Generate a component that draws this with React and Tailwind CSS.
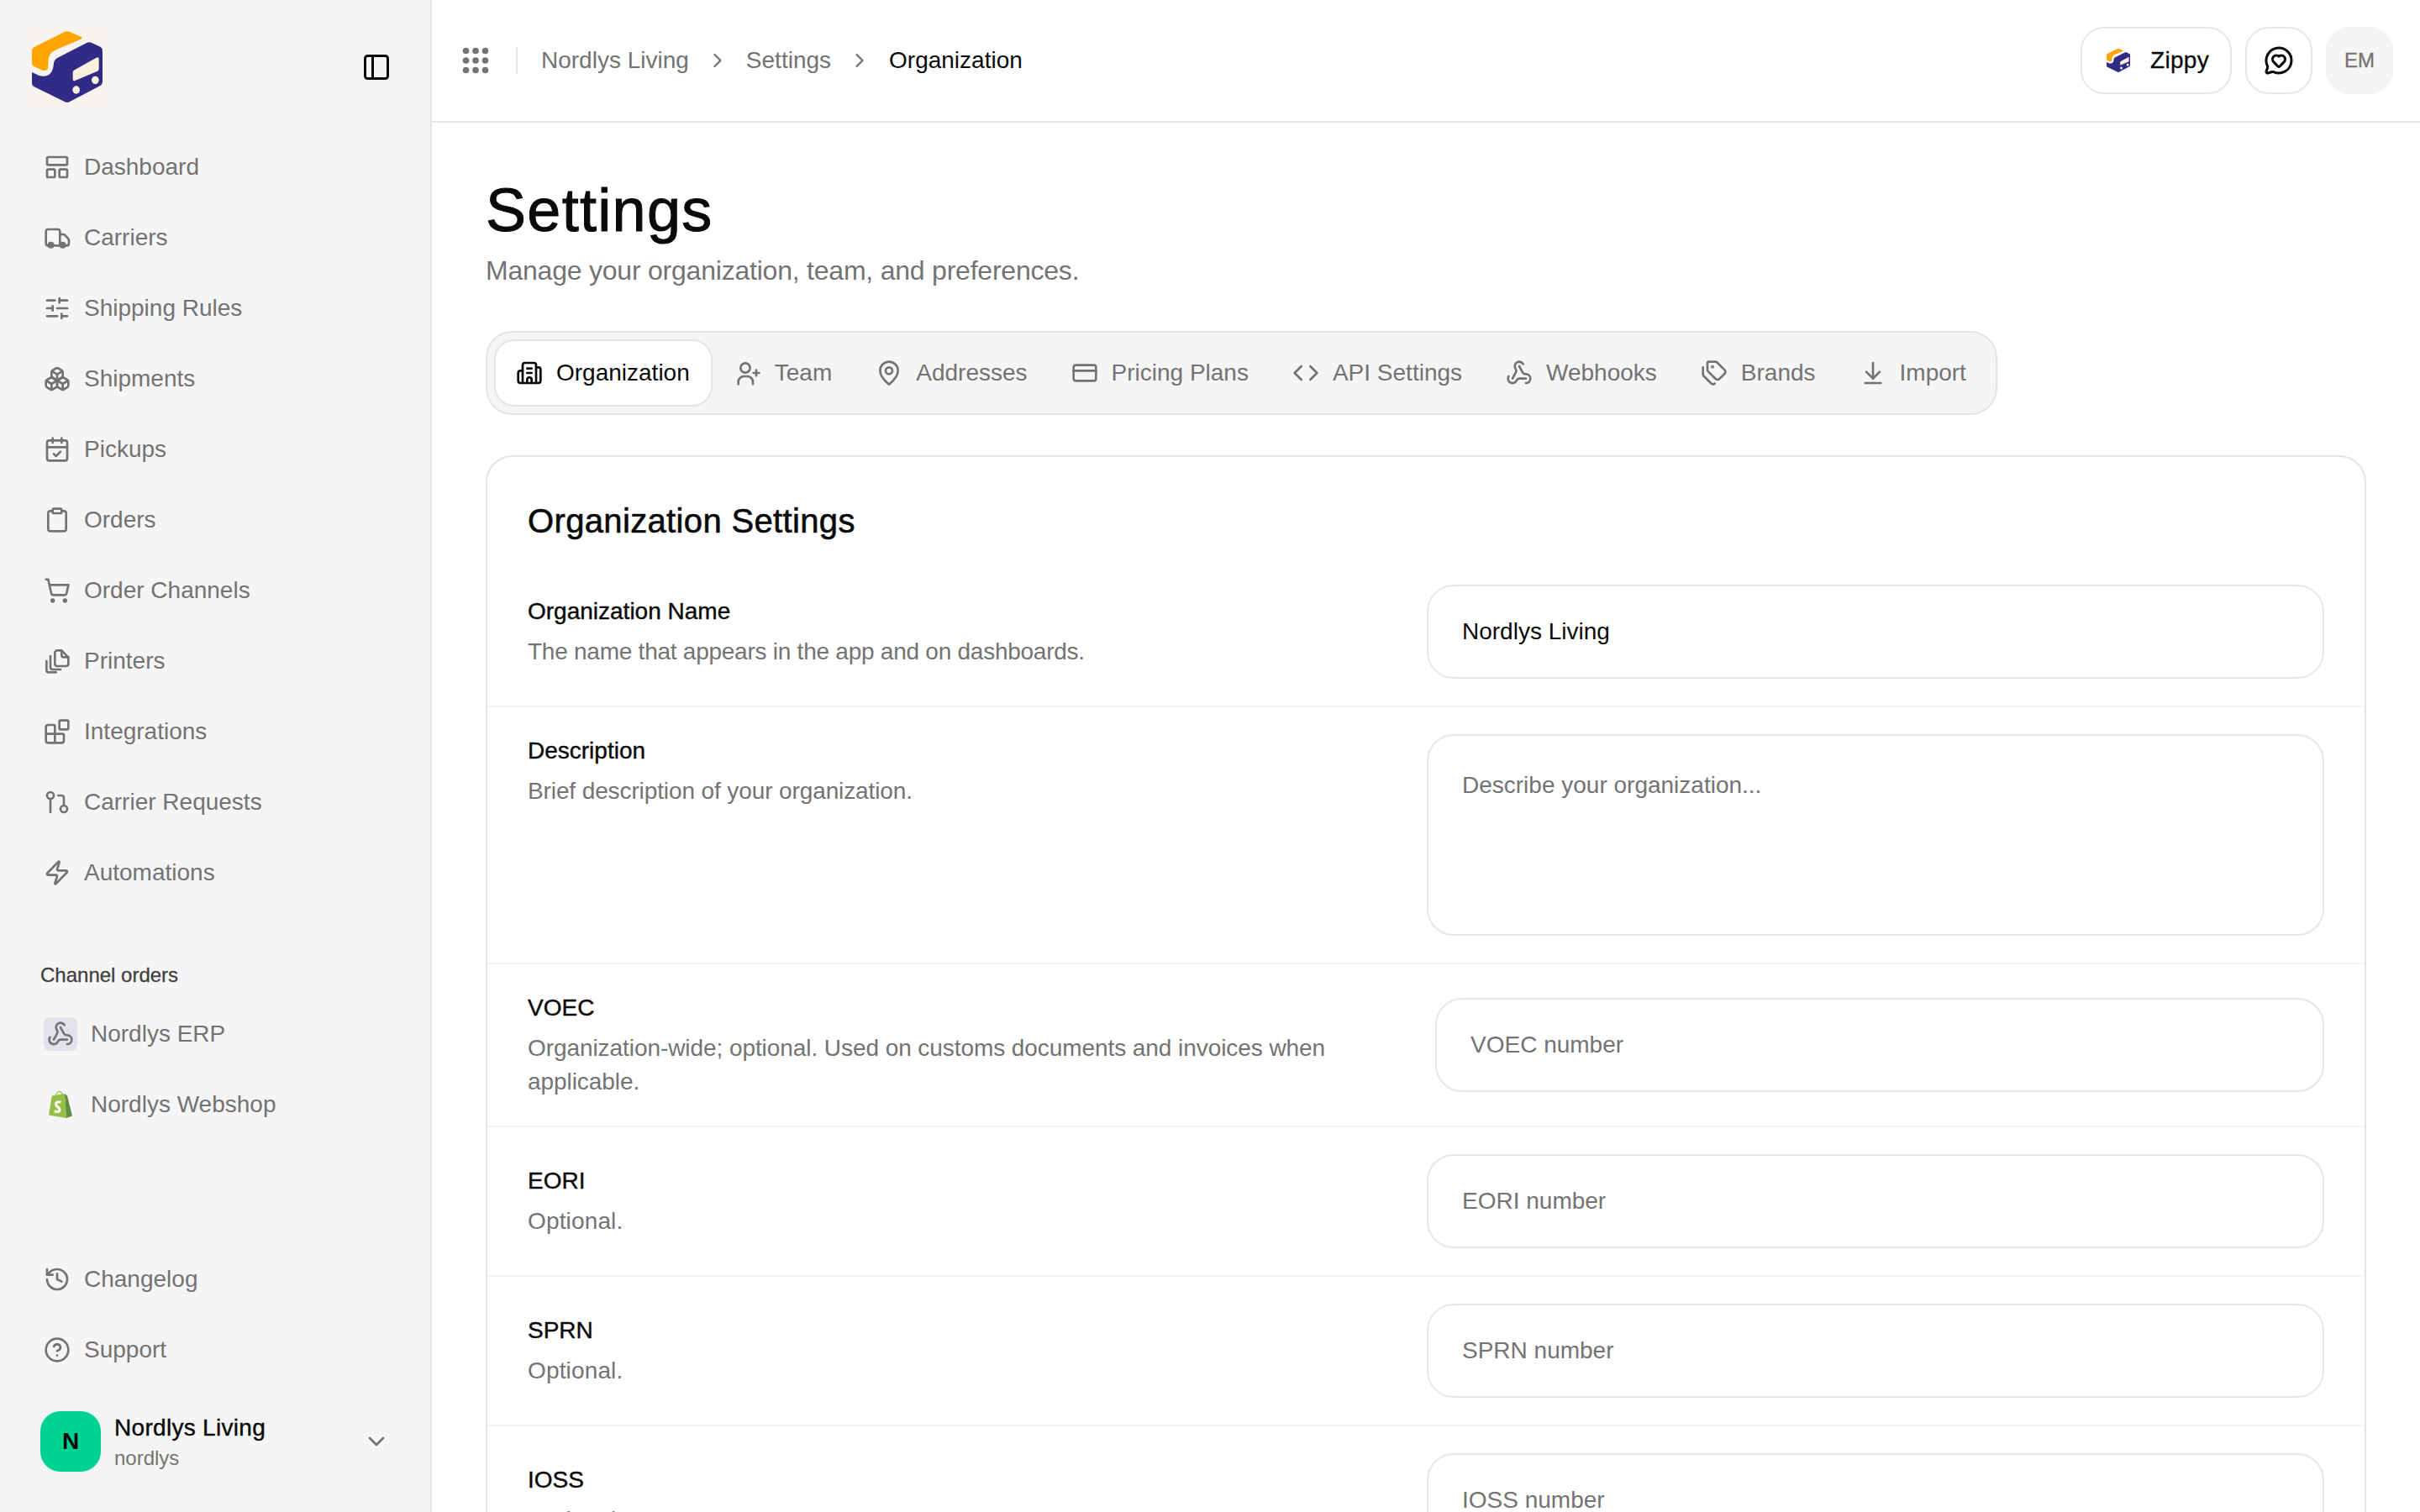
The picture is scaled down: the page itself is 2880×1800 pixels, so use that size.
import {
  LayoutPanelTop, SlidersHorizontal, Boxes, CalendarCheck, Clipboard, ShoppingCart, Blocks,
  GitPullRequest, Zap, History, CircleHelp, ChevronDown, ChevronRight, PanelLeft, Building2,
  MapPin, CreditCard, Code, Webhook, Tags, ArrowDownToLine, MessageCircleHeart,
} from 'lucide-react'

const IconBase = ({ size = 32, children }) => (
  <svg width={size} height={size} viewBox="0 0 24 24" fill="none" stroke="currentColor" strokeWidth="2" strokeLinecap="round" strokeLinejoin="round" className="shrink-0">
    {children}
  </svg>
)

const TruckIcon = ({ size }) => (
  <IconBase size={size}>
    <path d="M4 19a2 2 0 0 1-2-2V6.5a2 2 0 0 1 2-2h8.5a2 2 0 0 1 2 2V19" />
    <path d="M14.5 9h3a2 2 0 0 1 1.5.7l3 3.4a2 2 0 0 1 .5 1.3V17a2 2 0 0 1-2 2" />
    <path d="M4 19h16" />
    <circle cx="6.5" cy="18.5" r="2" fill="currentColor" />
    <circle cx="17" cy="18.5" r="2" fill="currentColor" />
  </IconBase>
)

const PrintersIcon = ({ size }) => (
  <IconBase size={size}>
    <path d="M16 2.5h-4a2 2 0 0 0-2 2v10a2 2 0 0 0 2 2h8a2 2 0 0 0 2-2V8.5z" />
    <path d="M16 2.5v4a2 2 0 0 0 2 2h4" />
    <path d="M6 7.5v10a2 2 0 0 0 2 2h7" />
    <path d="M2.5 12v8a2 2 0 0 0 2 2H11" />
  </IconBase>
)

const TeamIcon = ({ size }) => (
  <IconBase size={size}>
    <circle cx="9.75" cy="7.5" r="4.25" />
    <path d="M3.5 22v-2a5 5 0 0 1 5-5h3a5 5 0 0 1 5 5v2" />
    <path d="M19.5 9.5v5" />
    <path d="M17 12h5" />
  </IconBase>
)

const navItems = [
  { label: 'Dashboard', icon: LayoutPanelTop },
  { label: 'Carriers', icon: TruckIcon },
  { label: 'Shipping Rules', icon: SlidersHorizontal },
  { label: 'Shipments', icon: Boxes },
  { label: 'Pickups', icon: CalendarCheck },
  { label: 'Orders', icon: Clipboard },
  { label: 'Order Channels', icon: ShoppingCart },
  { label: 'Printers', icon: PrintersIcon },
  { label: 'Integrations', icon: Blocks },
  { label: 'Carrier Requests', icon: GitPullRequest },
  { label: 'Automations', icon: Zap },
]

const tabs = [
  { label: 'Organization', icon: Building2, active: true },
  { label: 'Team', icon: TeamIcon },
  { label: 'Addresses', icon: MapPin },
  { label: 'Pricing Plans', icon: CreditCard },
  { label: 'API Settings', icon: Code },
  { label: 'Webhooks', icon: Webhook },
  { label: 'Brands', icon: Tags },
  { label: 'Import', icon: ArrowDownToLine },
]

const Logo = ({ size, backdrop }) => (
  <svg width={size} height={size} viewBox="36 36 288 288" className="shrink-0">
    {backdrop && <rect x="36" y="36" width="288" height="288" fill="#f7f4ef" />}
    <path d="M172 53Q180 50 190 54L230 72Q236 76 228 80L140 118Q112 130 112 160L112 178Q110 196 92 191L62 178Q54 174 54 165L54 122Q54 112 62 108Z" fill="#ffa400" />
    <path d="M248 94Q256 88 266 92L298 107Q306 111 306 120L306 232Q306 242 298 246L188 304Q180 308 172 304L62 250Q54 246 54 238L54 198L80 210Q128 222 132 165Q134 152 146 146Z" fill="#322b85" />
    <path d="M206 190L284 146Q293 142 293 152L293 186Q293 192 288 194L208 228Q200 231 200 222L200 198Q200 193 206 190Z" fill="#faf0e0" />
    <ellipse cx="212" cy="261" rx="13" ry="14" fill="#faf0e0" />
    <ellipse cx="280" cy="226" rx="13" ry="14" fill="#faf0e0" />
  </svg>
)

const ShopifyIcon = () => (
  <svg width="28" height="32" viewBox="0 0 28 32" className="shrink-0">
    <path d="M0 28.5L3.6 6.5Q3.8 5.4 5 5.2L19 3L21 32Z" fill="#95bf47" />
    <path d="M19 3L22 5.5L28 29.5L21 32Z" fill="#5e8e3e" />
    <path d="M8 7C8 3 11 0 13.5 .6C16 1.2 16.4 3.5 16.4 5.5" fill="none" stroke="#95bf47" strokeWidth="1.2" />
    <path d="M14.5 13.2C11.2 11.8 8.2 13.4 8.6 16C9 18.6 13 19 13 22C13 25 9.6 25.2 7 23.6" fill="none" stroke="#fff" strokeWidth="3" />
  </svg>
)

const NavRow = ({ icon: Icon, label }) => (
  <div className="flex h-[76px] items-center gap-4 px-5 text-[28px] text-[#737373]">
    <Icon size={32} className="shrink-0" />
    <span>{label}</span>
  </div>
)

const Sidebar = () => (
  <aside className="flex h-full w-[514px] shrink-0 flex-col border-r-2 border-[#e5e5e5] bg-[#f5f5f5] px-8 pt-8 pb-12">
    <div className="flex h-24 items-center justify-between pr-[14px]">
      <Logo size={96} backdrop />
      <PanelLeft size={36} className="text-[#0a0a0a]" />
    </div>
    <nav className="mt-[33px] flex flex-col gap-2">
      {navItems.map((item) => <NavRow key={item.label} {...item} />)}
    </nav>
    <div className="mt-[68px] px-4 text-[24px] leading-8 text-[#404040] [-webkit-text-stroke:0.3px]">Channel orders</div>
    <div className="mt-4 flex flex-col gap-2">
      <div className="flex h-[76px] items-center gap-4 px-5 text-[28px] text-[#737373]">
        <span className="flex size-10 items-center justify-center rounded-lg bg-[#e2e3ea]">
          <Webhook size={32} />
        </span>
        Nordlys ERP
      </div>
      <div className="flex h-[76px] items-center gap-4 px-5 text-[28px] text-[#737373]">
        <span className="flex size-10 items-center justify-center"><ShopifyIcon /></span>
        Nordlys Webshop
      </div>
    </div>
    <div className="mt-auto flex flex-col gap-2">
      <NavRow icon={History} label="Changelog" />
      <NavRow icon={CircleHelp} label="Support" />
    </div>
    <div className="mt-[35px] flex items-center gap-4 px-4">
      <div className="flex size-[72px] items-center justify-center rounded-3xl bg-[#00d492] text-[28px] font-bold text-[#0a0a0a]">N</div>
      <div className="flex-1">
        <div className="text-[28px] leading-10 tracking-[0.3px] text-[#0a0a0a] [-webkit-text-stroke:0.4px]">Nordlys Living</div>
        <div className="text-[24px] leading-8 text-[#737373]">nordlys</div>
      </div>
      <ChevronDown size={32} className="text-[#737373]" />
    </div>
  </aside>
)

const GridDots = () => (
  <svg width="32" height="32" viewBox="0 0 32 32" className="shrink-0 fill-[#737373]">
    <circle cx="4.5" cy="4.5" r="3.8" /><circle cx="16" cy="4.5" r="3.8" /><circle cx="27.5" cy="4.5" r="3.8" />
    <circle cx="4.5" cy="16" r="3.8" /><circle cx="16" cy="16" r="3.8" /><circle cx="27.5" cy="16" r="3.8" />
    <circle cx="4.5" cy="27.5" r="3.8" /><circle cx="16" cy="27.5" r="3.8" /><circle cx="27.5" cy="27.5" r="3.8" />
  </svg>
)

const Header = () => (
  <header className="flex h-[146px] shrink-0 items-center border-b-2 border-[#e5e5e5] pr-8 pl-9 text-[28px]">
    <GridDots />
    <div className="mr-7 ml-[32px] h-8 w-0.5 bg-[#e5e5e5]" />
    <div className="flex items-center gap-5 text-[#737373]">
      <span>Nordlys Living</span>
      <ChevronRight size={28} />
      <span>Settings</span>
      <ChevronRight size={28} />
      <span className="ml-px text-[#0a0a0a]">Organization</span>
    </div>
    <div className="ml-auto flex items-center gap-4">
      <button className="flex h-20 w-[180px] items-center gap-[22px] rounded-[28px] border-2 border-[#e5e7eb] pl-[27px] tracking-[0.3px] text-[#0a0a0a] [-webkit-text-stroke:0.3px]">
        <Logo size={32} />
        Zippy
      </button>
      <button className="flex size-20 items-center justify-center rounded-[28px] border-2 border-[#e5e7eb] text-[#0a0a0a]">
        <MessageCircleHeart size={36} />
      </button>
      <div className="flex size-20 items-center justify-center rounded-[28px] bg-[#f5f5f5] text-[24px] text-[#737373] [-webkit-text-stroke:0.3px]">EM</div>
    </div>
  </header>
)

const Tabs = () => (
  <div className="mt-12 flex w-fit rounded-[32px] border-2 border-[#e5e5e5] bg-[#f5f5f5] p-2 pr-[9px] text-[28px]">
    {tabs.map(({ label, icon: Icon, active }) => (
      <div
        key={label}
        className={active
          ? 'flex h-20 items-center gap-4 rounded-3xl border-2 border-[#e5e5e5] bg-white pr-[25px] pl-6 text-[#0a0a0a]'
          : 'flex h-20 items-center gap-4 rounded-3xl border-2 border-transparent px-6 text-[#737373]'}
      >
        <Icon size={32} />
        {label}
      </div>
    ))}
  </div>
)

const inputClass = 'h-28 w-full rounded-[32px] border-2 border-[#e5e7eb] bg-white px-10 text-[28px] text-[#0a0a0a] outline-none placeholder:text-[#737373]'

const Field = ({ label, hint, children, align = 'items-center', right = 'w-[1068px]', border = true, tracking = 'tracking-[0.15px]' }) => (
  <div className={`flex justify-between px-12 py-8 ${align} ${border ? 'border-b-2 border-[#f3f4f6]' : ''}`}>
    <div className="max-w-[960px]">
      <div className="text-[28px] leading-10 text-[#0a0a0a] [-webkit-text-stroke:0.4px]">{label}</div>
      <div className={`mt-2 text-[28px] leading-10 text-[#737373] ${tracking}`}>{hint}</div>
    </div>
    <div className={`shrink-0 ${right}`}>{children}</div>
  </div>
)

export default function App() {
  return (
    <div className="flex h-screen w-full overflow-hidden bg-white font-['Liberation_Sans',Arial,sans-serif]">
      <Sidebar />
      <main className="flex min-w-0 flex-1 flex-col overflow-hidden">
        <Header />
        <div className="px-16 pt-16">
          <h1 className="text-[72px] leading-20 tracking-[1.3px] text-[#0a0a0a] [-webkit-text-stroke:1px]">Settings</h1>
          <p className="mt-2 text-[32px] leading-12 tracking-[-0.22px] text-[#737373]">Manage your organization, team, and preferences.</p>
          <Tabs />
          <section className="mt-12 rounded-t-[32px] border-2 border-[#e5e5e5]">
            <h2 className="px-12 pt-12 pb-4 text-[40px] leading-14 tracking-[0.35px] text-[#0a0a0a] [-webkit-text-stroke:0.6px]">Organization Settings</h2>
            <Field label="Organization Name" hint="The name that appears in the app and on dashboards." tracking="tracking-[-0.25px]">
              <input className={inputClass} defaultValue="Nordlys Living" readOnly />
            </Field>
            <Field label="Description" hint="Brief description of your organization." align="items-start" tracking="tracking-[-0.11px]">
              <textarea className="block h-[240px] w-full resize-none rounded-[32px] border-2 border-[#e5e7eb] bg-white px-10 pt-[39px] pb-6 text-[28px] leading-10 outline-none placeholder:text-[#737373]" placeholder="Describe your organization..." readOnly />
            </Field>
            <Field label="VOEC" hint="Organization-wide; optional. Used on customs documents and invoices when applicable." right="w-[1058px]" tracking="tracking-[-0.07px]">
              <input className={inputClass} placeholder="VOEC number" readOnly />
            </Field>
            <Field label="EORI" hint="Optional.">
              <input className={inputClass} placeholder="EORI number" readOnly />
            </Field>
            <Field label="SPRN" hint="Optional.">
              <input className={inputClass} placeholder="SPRN number" readOnly />
            </Field>
            <Field label="IOSS" hint="Optional." border={false}>
              <input className={inputClass} placeholder="IOSS number" readOnly />
            </Field>
          </section>
        </div>
      </main>
    </div>
  )
}
